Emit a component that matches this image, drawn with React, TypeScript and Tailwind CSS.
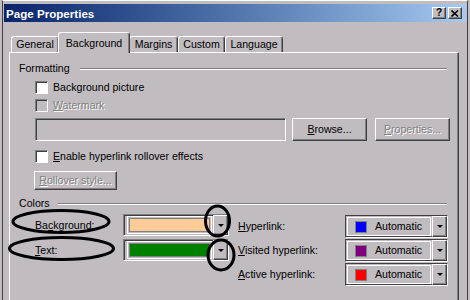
import type { ReactNode } from "react";

const raised =
  "border border-t-white border-l-white border-r-[#404040] border-b-[#404040] shadow-[inset_-1px_-1px_#808080]";
const sunken =
  "border border-t-[#808080] border-l-[#808080] border-r-white border-b-white shadow-[inset_1px_1px_#404040]";
const disabledText = "text-[#808080] [text-shadow:1px_1px_0_#ffffff]";

function U({ children }: { children: ReactNode }) {
  return <span className="underline underline-offset-[1px]">{children}</span>;
}

function Arrow() {
  return (
    <div className="w-0 h-0 border-l-[3px] border-r-[3px] border-t-[3px] border-l-transparent border-r-transparent border-t-black" />
  );
}

function DropButton() {
  return (
    <div className={`w-[15px] h-full flex items-center justify-center bg-[#c0bcc0] ${raised}`}>
      <Arrow />
    </div>
  );
}

function Checkbox({ disabled = false }: { disabled?: boolean }) {
  return (
    <div className={`w-[13px] h-[13px] shrink-0 ${disabled ? "bg-[#c0bcc0]" : "bg-white"} ${sunken}`} />
  );
}

function CheckRow({ children, disabled = false }: { children: ReactNode; disabled?: boolean }) {
  return (
    <div className="ml-[16px] flex items-center h-[13px] gap-[5px]">
      <Checkbox disabled={disabled} />
      <span className={disabled ? disabledText : ""}>{children}</span>
    </div>
  );
}

function GroupHeader({ label, gap }: { label: string; gap: string }) {
  return (
    <div className="flex items-center h-[13px]">
      <span>{label}</span>
      <div className={`${gap} flex-1 mr-[11px] h-[2px] border-t border-t-[#808080] border-b border-b-white`} />
    </div>
  );
}

function ColorBox({ color }: { color: string }) {
  return (
    <div className={`w-[106px] h-[22px] flex ${sunken}`}>
      <div className="flex-1 p-[1px] pl-[3px]">
        <div className="h-full border border-white p-[1px]">
          <div className={`h-full border border-[#808080] ${color}`} />
        </div>
      </div>
      <DropButton />
    </div>
  );
}

function AutoBox({ swatch }: { swatch: string }) {
  return (
    <div className="w-[103px] h-[23px] flex border border-t-[#404040] border-l-[#404040] border-r-white border-b-white shadow-[inset_-1px_-1px_#404040]">
      <div className="flex-1 p-[1px]">
        <div className="h-full border border-white flex items-center pl-[7px] gap-[8px]">
          <div className={`w-[12px] h-[12px] border border-[#808080] ${swatch}`} />
          <span>Automatic</span>
        </div>
      </div>
      <DropButton />
    </div>
  );
}

const tabs = [
  { label: "General", w: "w-[48px]", active: false },
  { label: "Background", w: "w-[72px]", active: true },
  { label: "Margins", w: "w-[49px]", active: false },
  { label: "Custom", w: "w-[47px]", active: false },
  { label: "Language", w: "w-[58px]", active: false },
];

export default function App() {
  return (
    <div className="relative w-[470px] h-[300px] overflow-hidden bg-[#c0bcc0] text-[10.6px] leading-[13px] text-black font-['Liberation_Sans',Arial,sans-serif]">
      <div className="ml-[2px] w-[466px] h-full flex flex-col pt-[3px] px-[1px] border-l border-r border-[#404040] border-t border-t-white">
        {/* Title bar */}
        <div className="h-[18px] flex items-center pl-[2px] pr-[4px] bg-gradient-to-r from-[#0a246a] to-[#a6caf0]">
          <span className="font-bold text-white text-[11.6px]">Page Properties</span>
          <div className="ml-auto flex gap-[2px]">
            <div className={`w-[14px] h-[12px] bg-[#c0bcc0] flex items-center justify-center font-bold text-[10px] leading-none ${raised}`}>
              ?
            </div>
            <div className={`w-[14px] h-[12px] bg-[#c0bcc0] flex items-center justify-center ${raised}`}>
              <svg width="8" height="7" viewBox="0 0 8 7">
                <path d="M0.5 0.5 L7 6.5 M7 0.5 L0.5 6.5" stroke="black" strokeWidth="1.6" />
              </svg>
            </div>
          </div>
        </div>

        {/* Tabs */}
        <div className="mt-[10px] ml-[7px] h-[20px] flex items-end">
          {tabs.map((t) => (
            <div
              key={t.label}
              className={`${t.w} flex items-center justify-center bg-[#c0bcc0] border-t border-l border-white border-r border-r-[#404040] rounded-t-[3px] shadow-[inset_-1px_0_#808080] ${
                t.active ? "h-[21px] -mb-px relative z-10 -mx-[1px] px-[1px]" : "h-[16px]"
              }`}
            >
              {t.label}
            </div>
          ))}
        </div>

        {/* Panel */}
        <div className="ml-[5px] w-[450px] flex-1 border-t border-l border-white border-r border-r-[#404040] shadow-[inset_-1px_0_#808080] pl-[9px] pt-[9px]">
          <GroupHeader label="Formatting" gap="ml-[10px]" />

          <div className="mt-[6px]">
            <CheckRow>Background picture</CheckRow>
          </div>
          <div className="mt-[5px]">
            <CheckRow disabled>
              <U>W</U>atermark
            </CheckRow>
          </div>

          <div className="mt-[6px] ml-[16px] flex h-[23px]">
            <div className={`w-[251px] h-full ${sunken}`} />
            <div className={`ml-[6px] w-[75px] h-full flex items-center justify-center ${raised}`}>
              <span>
                <U>B</U>rowse...
              </span>
            </div>
            <div className={`ml-[8px] w-[75px] h-full flex items-center justify-center ${raised}`}>
              <span className={disabledText}>
                <U>P</U>roperties...
              </span>
            </div>
          </div>

          <div className="mt-[9px]">
            <CheckRow>
              <U>E</U>nable hyperlink rollover effects
            </CheckRow>
          </div>

          <div className={`mt-[8px] ml-[15px] w-[83px] h-[19px] flex items-center justify-center ${raised}`}>
            <span className={disabledText}>
              <U>R</U>ollover style...
            </span>
          </div>

          <div className="mt-[7px]">
            <GroupHeader label="Colors" gap="ml-[8px]" />
          </div>

          <div className="mt-[4px] flex">
            <div className="ml-[16px] flex flex-col gap-[3px]">
              <div className="flex items-center h-[22px]">
                <span className="w-[88px]">
                  Ba<U>c</U>kground:
                </span>
                <ColorBox color="bg-[#ffcc99]" />
              </div>
              <div className="flex items-center h-[22px]">
                <span className="w-[88px]">
                  <U>T</U>ext:
                </span>
                <ColorBox color="bg-[#008000]" />
              </div>
            </div>

            <div className="ml-[9px] mt-[1px] flex flex-col gap-[1px]">
              <div className="flex items-center h-[23px]">
                <span className="w-[107px]">
                  <U>H</U>yperlink:
                </span>
                <AutoBox swatch="bg-[#0000ff]" />
              </div>
              <div className="flex items-center h-[23px]">
                <span className="w-[107px]">
                  <U>V</U>isited hyperlink:
                </span>
                <AutoBox swatch="bg-[#800080]" />
              </div>
              <div className="flex items-center h-[23px]">
                <span className="w-[107px]">
                  <U>A</U>ctive hyperlink:
                </span>
                <AutoBox swatch="bg-[#ff0000]" />
              </div>
            </div>
          </div>
        </div>
      </div>

      {/* Hand-drawn annotation circles */}
      <svg className="absolute inset-0 pointer-events-none" width="470" height="300" viewBox="0 0 470 300">
        <g fill="none" stroke="black" strokeWidth="3">
          <ellipse cx="61" cy="221.5" rx="48" ry="11" />
          <ellipse cx="61.5" cy="248.5" rx="52" ry="11" />
          <ellipse cx="217.5" cy="221" rx="12" ry="15" />
          <ellipse cx="221" cy="255" rx="13" ry="15" />
        </g>
      </svg>
    </div>
  );
}
